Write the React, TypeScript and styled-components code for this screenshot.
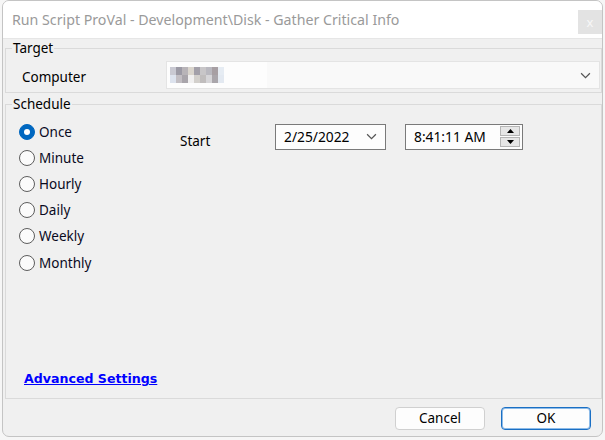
import React from "react";
import styled, { createGlobalStyle } from "styled-components";

const Global = createGlobalStyle`
  html, body { margin: 0; padding: 0; background: #f6f6f6; }
  body { font-family: "Noto Sans", "Liberation Sans", sans-serif; }
  * { box-sizing: border-box; }
`;

const Desktop = styled.div`
  width: 605px;
  height: 440px;
  padding-left: 2px;
  overflow: hidden;
  background: #f6f6f6;
`;

const Window = styled.div`
  width: 601px;
  height: 437px;
  border: 1px solid #c4c4c4;
  border-radius: 7px;
  background: #f0f0f0;
  display: flex;
  flex-direction: column;
  overflow: hidden;
`;

const TitleBar = styled.div`
  height: 38px;
  flex: none;
  background: #ffffff;
  border-bottom: 1px solid #e6e6e6;
  display: flex;
  align-items: flex-start;
`;

const Title = styled.div`
  flex: 1;
  padding: 9px 0 0 9px;
  font-size: 14.2px;
  line-height: 19px;
  color: #9a9a9a;
  white-space: nowrap;
`;

const CloseBtn = styled.div`
  width: 24px;
  height: 24px;
  margin-top: 9px;
  background: #e3e3e3;
  color: #f7f7f7;
  font-size: 13px;
  line-height: 1;
  display: flex;
  align-items: center;
  justify-content: center;
`;

const Body = styled.div`
  flex: 1;
  display: flex;
  flex-direction: column;
  padding: 1px 0 0 2px;
`;

const Group = styled.fieldset<{ $grow?: boolean }>`
  margin: 0;
  min-width: 0;
  border: 1px solid #dadada;
  padding: 0;
  display: flex;
  flex-direction: column;
  flex: ${(p) => (p.$grow ? 1 : "none")};
  & + & {
    margin-top: 3px;
  }
`;

const Legend = styled.legend`
  margin-left: 6px;
  padding: 0 1px;
  font-size: 13.5px;
  line-height: 17px;
  color: #000;
`;

const TargetRow = styled.div`
  display: flex;
  align-items: center;
  padding: 4px 1px 3px 16px;
`;

const FieldLabel = styled.div`
  width: 144px;
  font-size: 13.5px;
  color: #000;
  padding-top: 3px;
`;

const Combo = styled.div`
  flex: 1;
  height: 28px;
  border: 1px solid #e4e4e4;
  background: #f9f9f9;
  display: flex;
  align-items: center;
  justify-content: space-between;
`;

const Redacted = styled.div`
  width: 100px;
  height: 100%;
  background: #fdfdfd;
  display: flex;
  align-items: center;
  padding-left: 3px;
`;

const Chevron = styled.svg`
  margin-right: 8px;
  flex: none;
`;

const ScheduleBody = styled.div`
  flex: 1;
  display: flex;
  padding: 5.5px 0 0 13px;
`;

const RadioList = styled.div`
  width: 161px;
  display: flex;
  flex-direction: column;
`;

const RadioRow = styled.label`
  height: 26.2px;
  display: flex;
  align-items: center;
  gap: 4px;
  font-size: 13.5px;
  color: #0a0a1e;
`;

const RadioCircle = styled.span<{ $checked?: boolean }>`
  width: 16px;
  height: 16px;
  border-radius: 50%;
  flex: none;
  border: 1px solid ${(p) => (p.$checked ? "#0067c0" : "#5d5d5d")};
  background: ${(p) => (p.$checked ? "#0067c0" : "#fbfbfb")};
  display: flex;
  align-items: center;
  justify-content: center;
  &::after {
    content: "";
    width: 6px;
    height: 6px;
    border-radius: 50%;
    background: #fff;
    display: ${(p) => (p.$checked ? "block" : "none")};
  }
`;

const StartRow = styled.div`
  display: flex;
  align-items: flex-start;
  margin-top: 5px;
  height: 26px;
`;

const StartLabel = styled.div`
  width: 95px;
  padding-top: 8px;
  font-size: 13.5px;
  color: #000;
`;

const InputBox = styled.div<{ $w: number }>`
  width: ${(p) => p.$w}px;
  height: 26px;
  border: 1px solid #7a7a7a;
  background: #fdfdfd;
  display: flex;
  align-items: center;
  padding-left: 8px;
  font-size: 13.8px;
  color: #000;
  & + & {
    margin-left: 19px;
  }
`;

const BoxText = styled.span`
  flex: 1;
`;

const Spinner = styled.div`
  width: 20px;
  display: flex;
  flex-direction: column;
  gap: 1px;
  margin-right: 2px;
`;

const SpinBtn = styled.div`
  height: 10px;
  border: 1px solid #b5b5b5;
  background: #e6e6e6;
  display: flex;
  align-items: center;
  justify-content: center;
`;

const LinkRow = styled.div`
  padding: 0 0 10px 18px;
`;

const Link = styled.a`
  font-family: "DejaVu Sans", Verdana, sans-serif;
  font-weight: bold;
  font-size: 12.6px;
  color: #0000ff;
  text-decoration: underline;
  cursor: pointer;
`;

const Footer = styled.div`
  height: 37px;
  flex: none;
  display: flex;
  justify-content: flex-end;
  align-items: flex-start;
  gap: 16px;
  padding: 8px 11px 0 0;
`;

const Button = styled.button<{ $primary?: boolean }>`
  width: 90px;
  height: 23px;
  border-radius: 4px;
  font-family: "Noto Sans", "Liberation Sans", sans-serif;
  font-size: 13.5px;
  color: #000;
  background: #fdfdfd;
  border: 1px solid ${(p) => (p.$primary ? "#1a6fc4" : "#d0d0d0")};
  box-shadow: ${(p) => (p.$primary ? "inset 0 0 0 1px #8dbbe8" : "none")};
  padding: 0;
  line-height: 1;
`;

const mosaic = [
  ["#c9c9d2", "#9c9aa5", "#b8b4b8", "#dad5cd", "#a3a0a9", "#c8c6c8", "#b9b8bf", "#a79fa3", "#e6ecf3"],
  ["#dde3ee", "#c2bec3", "#a9a5ab", "#f1f0f0", "#d3d0cc", "#c0bdbd", "#d6d5d8", "#aaa6ab", "#e3e9f1"],
];

const chevronPath = "M1 1 L5 5 L9 1";

export default function App() {
  const options = ["Once", "Minute", "Hourly", "Daily", "Weekly", "Monthly"];
  return (
    <>
      <Global />
      <Desktop>
        <Window>
          <TitleBar>
            <Title>Run Script ProVal - Development\Disk - Gather Critical Info</Title>
            <CloseBtn>x</CloseBtn>
          </TitleBar>
          <Body>
            <Group>
              <Legend>Target</Legend>
              <TargetRow>
                <FieldLabel>Computer</FieldLabel>
                <Combo>
                  <Redacted>
                    <svg width="54" height="16" viewBox="0 0 54 16">
                      {mosaic.map((row, r) =>
                        row.map((c, i) => (
                          <rect key={`${r}-${i}`} x={i * 6} y={r * 8} width="6" height="8" fill={c} />
                        ))
                      )}
                    </svg>
                  </Redacted>
                  <Chevron width="11" height="7" viewBox="0 0 10 6">
                    <path d={chevronPath} stroke="#555" strokeWidth="1.1" fill="none" />
                  </Chevron>
                </Combo>
              </TargetRow>
            </Group>
            <Group $grow>
              <Legend>Schedule</Legend>
              <ScheduleBody>
                <RadioList>
                  {options.map((o, i) => (
                    <RadioRow key={o}>
                      <RadioCircle $checked={i === 0} />
                      {o}
                    </RadioRow>
                  ))}
                </RadioList>
                <StartRow>
                  <StartLabel>Start</StartLabel>
                  <InputBox $w={111}>
                    <BoxText>2/25/2022</BoxText>
                    <Chevron width="11" height="7" viewBox="0 0 10 6">
                      <path d={chevronPath} stroke="#555" strokeWidth="1.1" fill="none" />
                    </Chevron>
                  </InputBox>
                  <InputBox $w={118}>
                    <BoxText>8:41:11 AM</BoxText>
                    <Spinner>
                      <SpinBtn>
                        <svg width="7" height="4" viewBox="0 0 7 4">
                          <path d="M0 4 L3.5 0 L7 4 Z" fill="#000" />
                        </svg>
                      </SpinBtn>
                      <SpinBtn>
                        <svg width="7" height="4" viewBox="0 0 7 4">
                          <path d="M0 0 L3.5 4 L7 0 Z" fill="#000" />
                        </svg>
                      </SpinBtn>
                    </Spinner>
                  </InputBox>
                </StartRow>
              </ScheduleBody>
              <LinkRow>
                <Link>Advanced Settings</Link>
              </LinkRow>
            </Group>
            <Footer>
              <Button>Cancel</Button>
              <Button $primary>OK</Button>
            </Footer>
          </Body>
        </Window>
      </Desktop>
    </>
  );
}
